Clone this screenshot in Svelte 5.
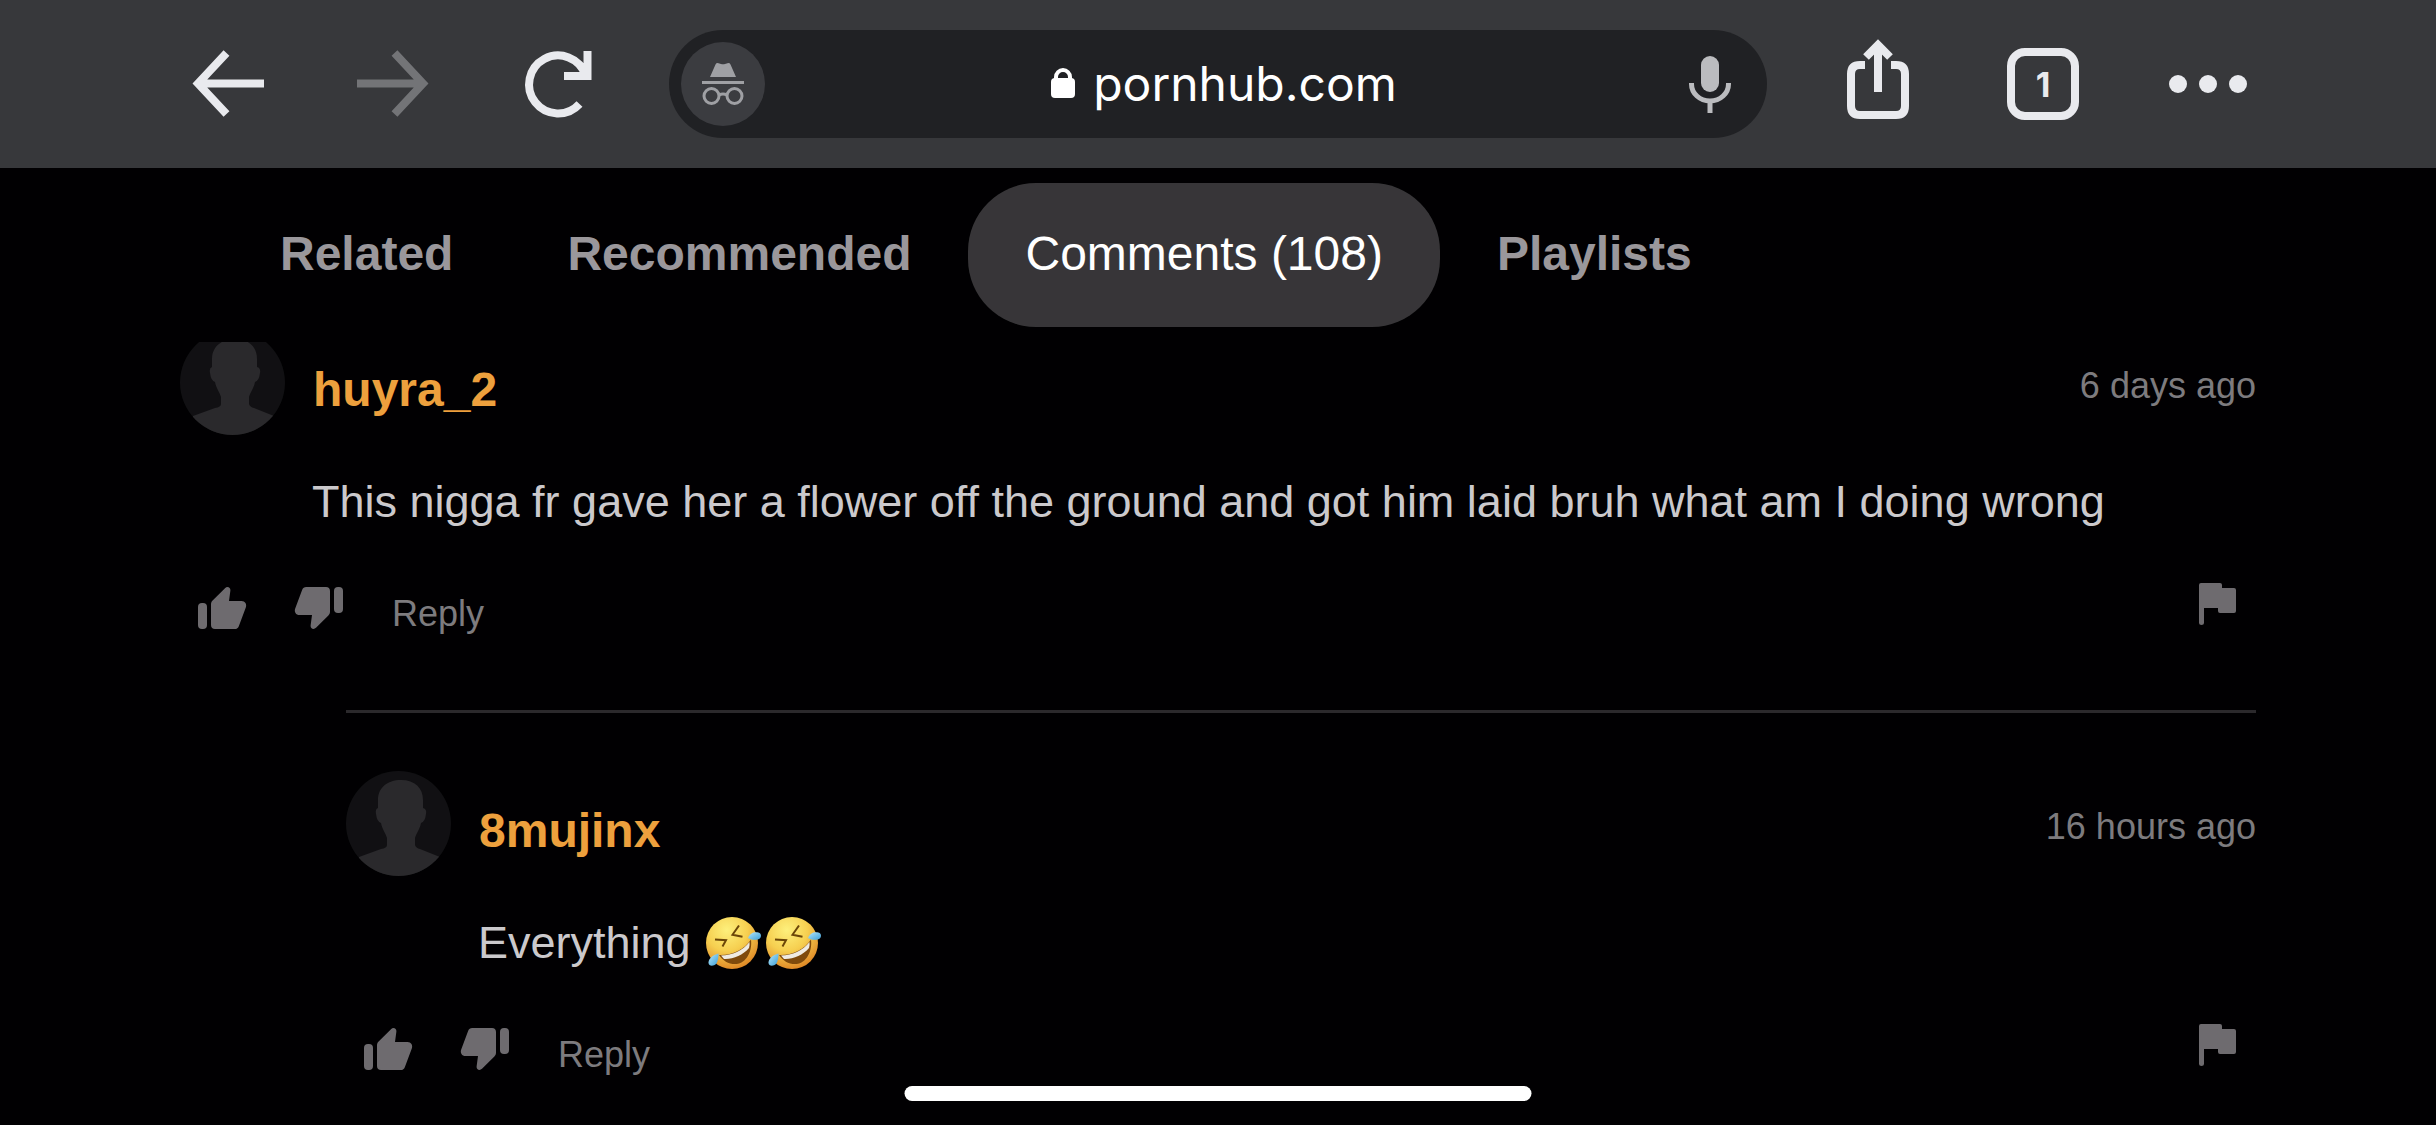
<script lang="ts">
  type Comment = {
    user: string;
    time: string;
    text: string;
    emojis: number;
    reply: boolean;
  };

  const tabs = ['Related', 'Recommended', 'Comments (108)', 'Playlists'];
  let active = $state('Comments (108)');

  const comments: Comment[] = [
    {
      user: 'huyra_2',
      time: '6 days ago',
      text: 'This nigga fr gave her a flower off the ground and got him laid bruh what am I doing wrong',
      emojis: 0,
      reply: false
    },
    { user: '8mujinx', time: '16 hours ago', text: 'Everything', emojis: 2, reply: true }
  ];
</script>

{#snippet thumb()}
  <rect x="0" y="16" width="9" height="26" rx="4" />
  <path
    d="M13 17.5c0-1.6.5-2.8 1.6-3.9L27 1.2c2.3-2.3 5.700-.8 5.400 2.400L31 14h12.500c3.600 0 5.600 3.200 4.300 6.600l-7 18.600c-.7 1.900-2 2.800-4 2.800H17c-2.500 0-4-1.500-4-4z"
  />
{/snippet}

{#snippet rofl()}
  <svg class="emoji" viewBox="0 0 60 60" role="img" aria-label="🤣">
    <defs>
      <radialGradient id="face" cx="0.4" cy="0.25" r="0.8">
        <stop offset="0" stop-color="#fdf07c" />
        <stop offset="0.5" stop-color="#f6cf50" />
        <stop offset="1" stop-color="#dd8122" />
      </radialGradient>
      <linearGradient id="tear" x1="0" y1="0" x2="1" y2="1">
        <stop offset="0" stop-color="#b4e6fa" />
        <stop offset="1" stop-color="#3c9fd8" />
      </linearGradient>
    </defs>
    <circle cx="29" cy="30" r="26" fill="url(#face)" />
    <path d="M12 26.500l11 .7-3.500 6.300M36 12.500l-6.500 9.300 10 2" fill="none" stroke="#6b4608" stroke-width="2" />
    <path d="M16 42C29 42.500 41 37 48 26.500 49.500 39 43 50 33.500 51 26 51.500 20 48 16 42z" fill="#7f4a0c" />
    <path d="M18 42.500C29 42.500 40 37.500 46.500 29c.3 2 .1 4-.5 6C40 42 30 46.500 21 46z" fill="#f0ebe2" />
    <path d="M45 25c2-5 6-6.500 10.500-5.500 3.500 1 3 5.500.5 6.500-3.500 1.500-7.500 1-11-1z" fill="url(#tear)" />
    <path d="M15.500 40.500C9.500 42 5.500 46 5.500 49.500c0 4 5 4 7.500 1.500 2-2.500 2.500-6.500 2.500-10.500z" fill="url(#tear)" />
  </svg>
{/snippet}

<div class="app">
  <header class="toolbar">
    <nav class="group">
      <button class="tool" aria-label="Back">
        <svg viewBox="0 0 72 72"><path d="M34.500 5L6 35.500 34.500 66M8 35.500h64" /></svg>
      </button>
      <button class="tool dim" aria-label="Forward">
        <svg viewBox="0 0 72 72"><path d="M37.500 5L66 35.500 37.500 66M64 35.500H0" /></svg>
      </button>
      <button class="tool" aria-label="Reload">
        <svg viewBox="0 0 72 72"><path d="M57.500 56A29 29 0 1 1 63.500 27M65.500 3v25H42" /></svg>
      </button>
    </nav>

    <div class="omnibox">
      <span class="incognito">
        <svg viewBox="0 0 42 42">
          <path d="M13.500 1.500q1-2 3-1.300l2.500.8q2 .6 4 0l2.500-.8q2-.7 3 1.300L34 14H8zM0 18h42v3H0z" />
          <g fill="none" stroke="currentColor" stroke-width="3">
            <circle cx="9.500" cy="33" r="7.500" />
            <circle cx="32.500" cy="33" r="7.500" />
            <path d="M17 32q4-2 8 0" />
          </g>
        </svg>
      </span>
      <button class="address">
        <svg viewBox="0 0 24 30">
          <rect y="10" width="24" height="20" rx="4" />
          <path d="M5 12V9a7 7 0 0 1 14 0v3" fill="none" stroke="currentColor" stroke-width="4" />
        </svg>
        pornhub.com
      </button>
      <button class="mic" aria-label="Voice search">
        <svg viewBox="0 0 42 57">
          <rect x="12" width="18" height="36" rx="9" />
          <path d="M2.500 27v1a18.500 17 0 0 0 37 0v-1M21 45v12" fill="none" stroke="currentColor" stroke-width="5" />
        </svg>
      </button>
    </div>

    <nav class="group">
      <button class="tool share" aria-label="Share">
        <svg viewBox="0 0 72 90">
          <path d="M23 26h-5q-9 0-9 9v32q0 9 9 9h36q9 0 9-9V35q0-9-9-9h-5M36 53V8M24 18l12-12 12 12" />
        </svg>
      </button>
      <button class="tool count" aria-label="Open tabs">1</button>
      <button class="tool" aria-label="More">
        <svg viewBox="0 0 72 72">
          <g fill="currentColor" stroke="none">
            <circle cx="6" cy="36" r="9" />
            <circle cx="36" cy="36" r="9" />
            <circle cx="66" cy="36" r="9" />
          </g>
        </svg>
      </button>
    </nav>
  </header>

  <nav class="tabs">
    {#each tabs as tab}
      <button class="tab" class:active={tab === active} onclick={() => (active = tab)}>{tab}</button>
    {/each}
  </nav>

  <main>
    {#each comments as c}
      <article class:reply={c.reply}>
        <div class="head">
          <svg class="avatar" viewBox="0 0 105 105">
            <clipPath id="round"><circle cx="52.500" cy="52.500" r="52.500" /></clipPath>
            <g clip-path="url(#round)">
              <rect width="105" height="105" fill="#111013" />
              <path
                d="M55 9c14 0 22 8 22 20v8q4 1 3 6-1 8-5 9c-1 6-5 11-6 15v7q1 3 5 4l20 8v19H13V86l22-8q6-1 6-4v-7c-1-4-5-9-6-15q-4-1-5-9-1-5 2-6v-8C32 17 41 9 55 9z"
                fill="#2a292c"
              />
            </g>
          </svg>
          <a class="user" href="#{c.user}">{c.user}</a>
          <time>{c.time}</time>
        </div>
        <p>
          {c.text}
          {#each { length: c.emojis } as _}{@render rofl()}{/each}
        </p>
        <div class="actions">
          <button aria-label="Like"><svg viewBox="0 0 48 42">{@render thumb()}</svg></button>
          <button aria-label="Dislike">
            <svg viewBox="0 0 48 42"><g transform="rotate(180 24 21)">{@render thumb()}</g></svg>
          </button>
          <button class="answer">Reply</button>
          <button class="flag" aria-label="Report">
            <svg viewBox="0 0 37 42">
              <path d="M2 0h19q2 0 2 2v3h12q2 0 2 2v21q0 2-2 2H21q-2 0-2-2v-3H5v15q0 2-2.500 2T0 40V2q0-2 2-2z" />
            </svg>
          </button>
        </div>
      </article>
    {/each}
  </main>

  <div class="home-bar"></div>
</div>

<style>
  :global(body) {
    background: #010002;
  }
  .app {
    position: relative;
    height: 100vh;
    display: flex;
    flex-direction: column;
    overflow: hidden;
    font-family: "Liberation Sans", Arial, sans-serif;
  }
  button {
    margin: 0;
    padding: 0;
    border: 0;
    background: none;
    color: inherit;
    font: inherit;
    cursor: pointer;
  }
  svg {
    display: block;
    fill: currentColor;
    overflow: visible;
  }

  .toolbar {
    flex: none;
    display: flex;
    align-items: center;
    gap: 75px;
    height: 168px;
    padding: 0 192px;
    box-sizing: border-box;
    background: #37383b;
    color: #e9eaee;
  }
  .group {
    display: flex;
    align-items: center;
    gap: 93px;
  }
  .tool {
    width: 72px;
    height: 72px;
  }
  .tool svg {
    width: 72px;
    fill: none;
    stroke: currentColor;
    stroke-width: 8;
  }
  .dim {
    color: #737477;
  }
  .share {
    height: 90px;
  }
  .count {
    box-sizing: border-box;
    border: 8px solid;
    border-radius: 18px;
    font: 700 34px Inter, sans-serif;
  }
  .omnibox {
    flex: 1;
    display: flex;
    align-items: center;
    height: 108px;
    padding: 0 36px 0 12px;
    box-sizing: border-box;
    border-radius: 54px;
    background: #202124;
  }
  .incognito {
    display: flex;
    align-items: center;
    justify-content: center;
    width: 84px;
    height: 84px;
    border-radius: 50%;
    background: #3b3c40;
    color: #9fa0a4;
  }
  .incognito svg {
    width: 42px;
  }
  .address {
    flex: 1;
    display: flex;
    align-items: center;
    justify-content: center;
    gap: 18px;
    padding: 0 6px 2px 0;
    color: #fff;
    font: 400 48px Inter, sans-serif;
  }
  .address svg {
    width: 24px;
  }
  .mic {
    color: #bbbcbf;
  }
  .mic svg {
    width: 42px;
  }

  .tabs {
    flex: none;
    display: flex;
    padding: 15px 223px;
  }
  .tab {
    height: 144px;
    padding: 0 57px 3px;
    border-radius: 68px;
    color: #9a979b;
    font-size: 48px;
    font-weight: 700;
  }
  .tab.active {
    background: #373538;
    color: #fff;
    font-weight: 400;
  }

  main {
    flex: 1;
    padding: 0 180px;
    overflow: hidden;
  }
  article {
    /* the list is scrolled a little under the tabs */
    margin-top: -12px;
    padding-bottom: 72px;
  }
  .reply {
    margin: 0 0 0 166px;
    padding-top: 58px;
    border-top: 3px solid #2b292c;
  }
  .head {
    display: flex;
    align-items: center;
  }
  .avatar {
    width: 105px;
    height: 105px;
  }
  .user {
    padding: 14px 0 0 28px;
    color: #eda03d;
    font-size: 48px;
    font-weight: 700;
    text-decoration: none;
  }
  time {
    margin-left: auto;
    padding-top: 6px;
    color: #7d7b7e;
    font-size: 36px;
  }
  p {
    margin: 37px 0 46px 132px;
    color: #cbc9cc;
    font-size: 45px;
    line-height: 60px;
  }
  .emoji {
    display: inline-block;
    width: 60px;
    height: 60px;
    vertical-align: top;
  }
  .actions {
    display: flex;
    align-items: center;
    gap: 49px;
    padding: 0 20px 0 18px;
    color: #6e6b6f;
  }
  .actions svg {
    width: 48px;
  }
  .answer {
    padding-top: 12px;
    color: #7d7b7e;
    font-size: 36px;
    line-height: 48px;
  }
  .flag {
    margin-left: auto;
    padding-bottom: 8px;
  }
  .flag svg {
    width: 37px;
  }

  .home-bar {
    position: absolute;
    left: 50%;
    bottom: 24px;
    width: 627px;
    height: 15px;
    border-radius: 8px;
    background: #fff;
    transform: translateX(-50%);
  }
</style>
